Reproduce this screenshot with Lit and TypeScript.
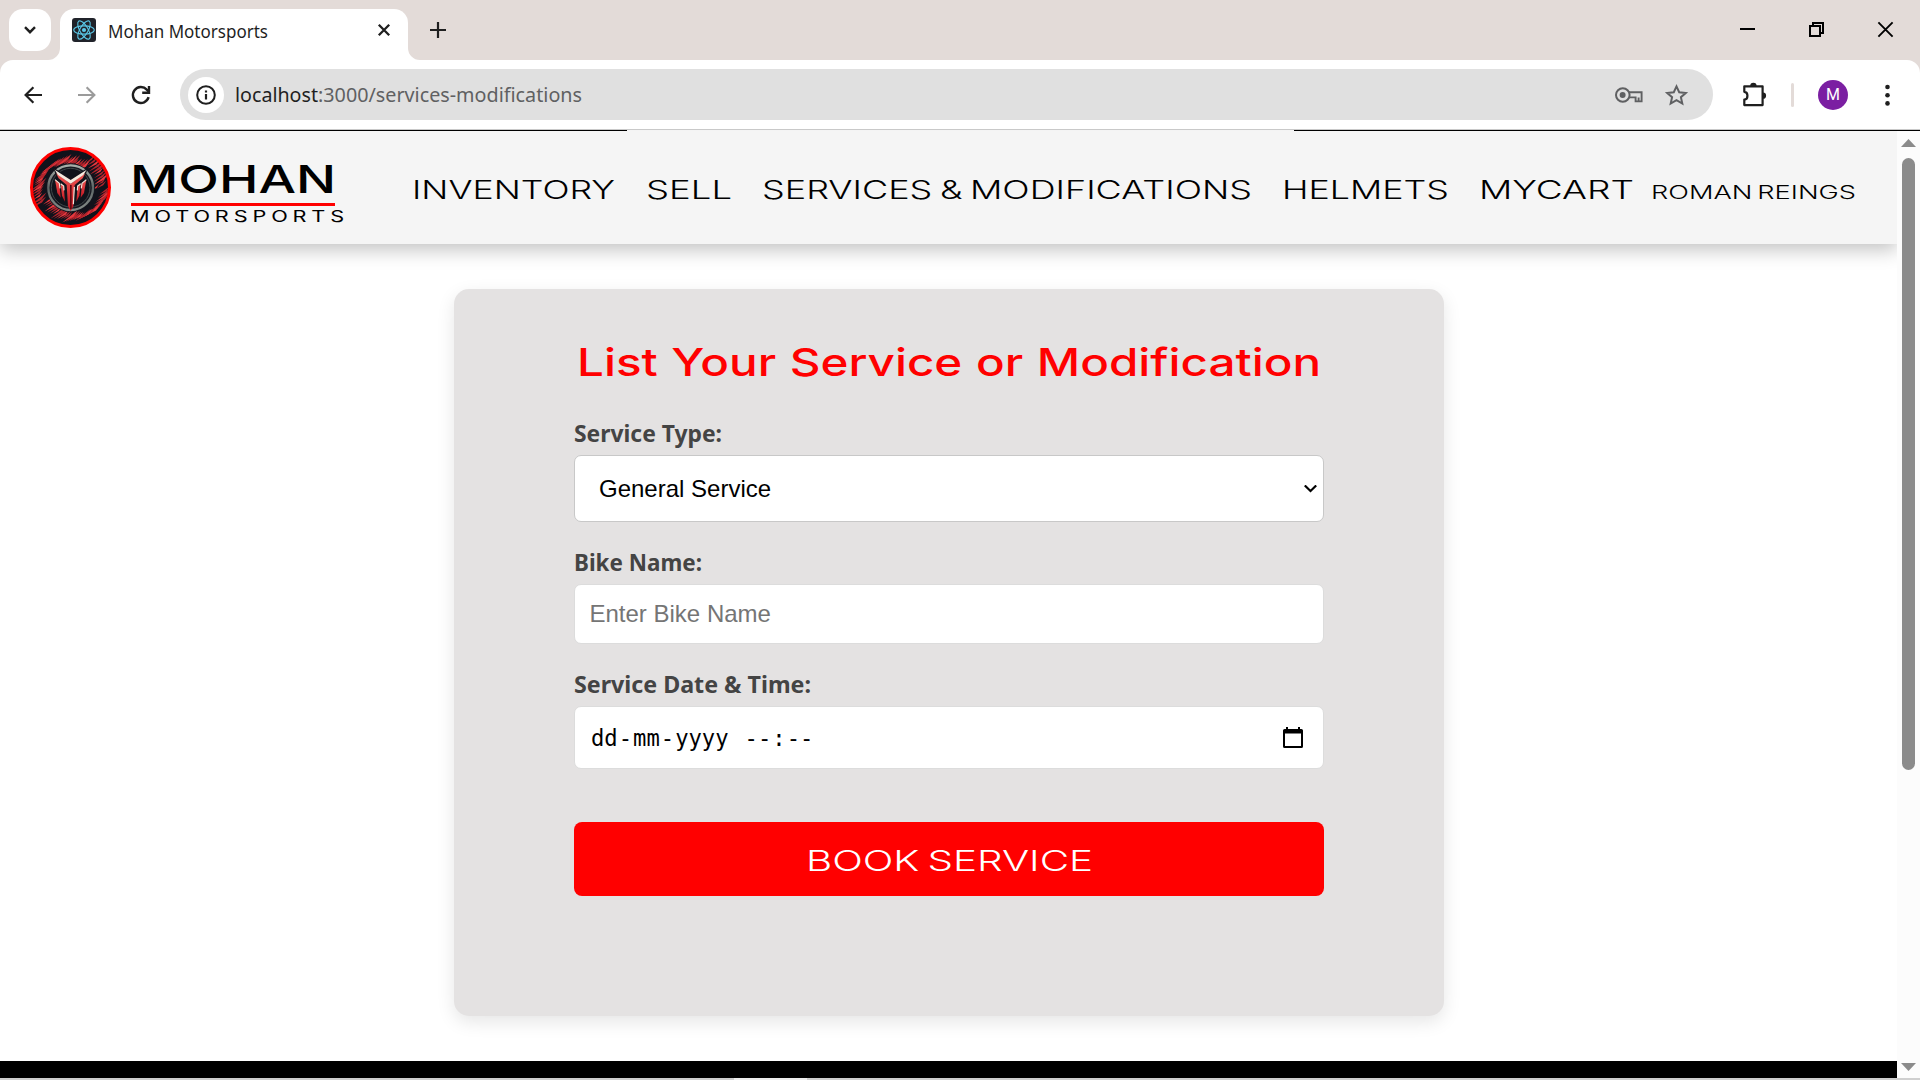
import { LitElement, html, svg, css } from "lit";
import { customElement, property } from "lit/decorators.js";

/** A single line of text set to an exact measure on a given baseline. */
@customElement("fit-text")
class FitText extends LitElement {
  @property() text = "";
  @property({ type: Number }) w = 100;
  @property({ type: Number }) h = 30;
  @property({ type: Number }) base = 22;
  @property({ type: Number }) size = 20;

  static styles = css`
    :host { display: block; flex: none; }
    svg { display: block; overflow: visible; }
    text { fill: currentColor; white-space: pre; }
  `;

  render() {
    return html`<svg width=${this.w} height=${this.h}>
      <text x="0" y=${this.base} font-size=${this.size} textLength=${this.w}
        lengthAdjust="spacingAndGlyphs">${this.text}</text></svg>`;
  }
}

@customElement("browser-chrome")
class BrowserChrome extends LitElement {
  static styles = css`
    :host { display: block; font-family: "Noto Sans", "Open Sans", sans-serif; color: #1f1f1f; }
    svg { display: block; flex: none; overflow: visible; }
    .strip { display: flex; height: 60px; background: #e3dbd8; box-sizing: border-box; padding: 9px 27px 0 9px; }
    .search { width: 42px; height: 42px; border-radius: 14px; background: #fff; display: grid; place-items: center; }
    .foot { align-self: flex-end; }
    .lead { margin-left: -3px; }
    .tab { width: 348px; height: 51px; background: #fff; border-radius: 14px 14px 0 0; display: flex;
      box-sizing: border-box; padding: 9px 18px 0 12px; }
    .title { margin: -9px auto 0 12px; }
    .x { margin-top: 6px; }
    .plus { margin: 13px auto 0 10px; }
    .win { display: flex; gap: 54px; margin-top: 13px; }
    .bar { display: flex; align-items: center; height: 69px; background: #e3dbd8; }
    .tools { display: flex; align-items: center; width: 100%; height: 69px; background: #fff;
      border-radius: 13px 13px 0 0; box-sizing: border-box; padding: 0 30.5px 0 24px; }
    .fwd { margin-left: 36px; }
    .reload { margin-left: 36px; }
    .url { margin-left: 30px; width: 1533px; height: 51px; border-radius: 26px; background: #e0e0e0;
      display: flex; align-items: center; box-sizing: border-box; padding: 0 25px 0 8px; }
    .info { width: 36px; height: 36px; border-radius: 50%; background: #fff; display: grid; place-items: center; }
    .host { margin-left: 11px; }
    .path { color: #5f6062; margin-right: auto; }
    .star { margin-left: 22px; }
    .puzzle { margin-left: 29px; }
    .sep { width: 3px; height: 24px; border-radius: 2px; background: #e3dbd8; margin-left: 24px; }
    .avatar { width: 30px; height: 30px; border-radius: 50%; background: #7b1fa2; color: #fff; margin-left: 24px;
      display: grid; place-items: center; font: 400 16px/30px Roboto, "Liberation Sans", sans-serif; }
    .dots { margin-left: auto; }
    .rule { height: 1px; background: #c9c9c9; }
  `;

  render() {
    return html`
      <div class="strip">
        <div class="search"><svg width="12" height="8" fill="none" stroke="#1f1f1f" stroke-width="2.4"><path d="M1 1.2 6 6.2 11 1.2" /></svg></div>
        <svg class="foot lead" width="12" height="12"><path d="M12 0V12H0A12 12 0 0 0 12 0Z" fill="#fff" /></svg>
        <div class="tab">
          <svg width="24" height="24" viewBox="0 0 24 24">
            <rect width="24" height="24" rx="3" fill="#20232a" />
            <g fill="none" stroke="#5bc8e8" stroke-width="1.1">
              <ellipse cx="12" cy="12" rx="10.3" ry="4.1" />
              <ellipse cx="12" cy="12" rx="10.3" ry="4.1" transform="rotate(60 12 12)" />
              <ellipse cx="12" cy="12" rx="10.3" ry="4.1" transform="rotate(120 12 12)" />
            </g><circle cx="12" cy="12" r="2.1" fill="#5bc8e8" />
          </svg>
          <fit-text class="title" text="Mohan Motorsports" w="160" h="40" base="29" size="18"></fit-text>
          <svg class="x" width="12" height="12" stroke="#1f1f1f" stroke-width="2.3"><path d="M.8.8 11.2 11.2M11.2.8.8 11.2" /></svg>
        </div>
        <svg class="foot" width="12" height="12"><path d="M0 0V12H12A12 12 0 0 1 0 0Z" fill="#fff" /></svg>
        <svg class="plus" width="16" height="16" stroke="#1f1f1f" stroke-width="2.2"><path d="M8 0V16M0 8H16" /></svg>
        <div class="win">
          <svg width="15" height="15" stroke="#000" stroke-width="2"><path d="M0 7H15" /></svg>
          <svg width="15" height="15" fill="none" stroke="#000" stroke-width="2"><path d="M1 4H11V14H1ZM4 4V1H14V11H11" /></svg>
          <svg width="15" height="15" stroke="#000" stroke-width="1.9"><path d="M.4.4 14.6 14.6M14.6.4.4 14.6" /></svg>
        </div>
      </div>
      <div class="bar"><div class="tools">
        <svg width="18" height="18" fill="none" stroke="#1f1f1f" stroke-width="2.2"><path d="M18 9H1.8M9.4 1.2 1.6 9 9.4 16.8" /></svg>
        <svg class="fwd" width="18" height="18" fill="none" stroke="#9b9b9b" stroke-width="2.1"><path d="M0 9H16.2M8.6 1.2 16.4 9 8.6 16.8" /></svg>
        <svg class="reload" width="18" height="18" fill="none" stroke="#1f1f1f" stroke-width="2.4"><path d="M16.6 11.2A8 8 0 1 1 14.8 3.6L17 5.8" /><path d="M17 0V6.8H10.2" /></svg>
        <div class="url">
          <div class="info"><svg width="20" height="20"><circle cx="10" cy="10" r="8.8" fill="none" stroke="#1f1f1f" stroke-width="2" /><path d="M10 9V14.6M10 5.4V7.5" stroke="#1f1f1f" stroke-width="2.2" /></svg></div>
          <fit-text class="host" text="localhost" w="83" h="51" base="32.6" size="20.5"></fit-text>
          <fit-text class="path" text=":3000/services-modifications" w="264" h="51" base="32.6" size="20.5"></fit-text>
          <svg width="28" height="18" viewBox="0 0 28 18"><circle cx="7.8" cy="9" r="6.8" fill="none" stroke="#5f6062" stroke-width="2" /><circle cx="7.6" cy="9" r="3" fill="#5f6062" /><path d="M14 6.2H26.6V15.4H20.6V11.4H14M23.6 15V11.6" fill="none" stroke="#5f6062" stroke-width="1.9" /></svg>
          <svg class="star" width="23" height="22" viewBox="0 0 23 22"><path d="M11.5 2.4 14.2 8.2 20.8 8.9 15.9 13.2 17.3 19.6 11.5 16.2 5.7 19.6 7.1 13.2 2.2 8.9 8.8 8.2Z" fill="none" stroke="#5f6062" stroke-width="2" /></svg>
        </div>
        <svg class="puzzle" width="25" height="25" viewBox="0 0 25 25"><path d="M2.3 4.3H20.6V23.1H2.3V17.6C6.5 17.4 6.5 10 2.3 9.8Z" fill="none" stroke="#1f1f1f" stroke-width="2.2" stroke-linejoin="round" /><path d="M8.2 4A3.2 3.2 0 0 1 14.6 4ZM21 10.6A3.1 3.1 0 0 1 21 16.8Z" fill="#1f1f1f" /></svg>
        <span class="sep"></span>
        <div class="avatar">M</div>
        <svg class="dots" width="5" height="22" fill="#1f1f1f"><circle cx="2.5" cy="3" r="2.3" /><circle cx="2.5" cy="11.2" r="2.3" /><circle cx="2.5" cy="19.4" r="2.3" /></svg>
      </div></div>
      <div class="rule"></div>`;
  }
}

@customElement("brand-logo")
class BrandLogo extends LitElement {
  static styles = css`:host { display: block; } svg { display: block; }`;

  render() {
    // Thin diagonal scratches scattered around the ring.
    const hatch = Array.from({ length: 72 }, (_, i) => {
      const a = (i / 72) * Math.PI * 2;
      const r = 74 + ((i * 29) % 30);
      const x = 121 + Math.cos(a) * r;
      const y = 121 + Math.sin(a) * r;
      const l = 12 + ((i * 17) % 14);
      return svg`<path d="M${x - l} ${y + l * 0.8}L${x + l} ${y - l * 0.8}L${x + l * 0.4} ${y + 2}Z"
        fill=${i % 3 ? "#b3242c" : "#e8383e"} />`;
    });
    return html`<svg width="81" height="81" viewBox="0 0 243 243">
      <defs><clipPath id="disc"><circle cx="121.5" cy="121.5" r="114" /></clipPath>
      <linearGradient id="steel" x1="0" y1="0" x2="0" y2="1"><stop offset="0" stop-color="#a9afa9" /><stop offset=".5" stop-color="#5d6666" /><stop offset="1" stop-color="#858b88" /></linearGradient>
      <linearGradient id="blade" x1="0" y1="0" x2="0" y2="1"><stop offset="0" stop-color="#ef5552" /><stop offset="1" stop-color="#c01420" /></linearGradient></defs>
      <circle cx="121.5" cy="121.5" r="117" fill="#11121b" />
      <g clip-path="url(#disc)">${hatch}</g>
      <circle cx="122" cy="122" r="73" fill="#151820" />
      <circle cx="122" cy="122" r="67" fill="none" stroke="url(#steel)" stroke-width="7" />
      <circle cx="122" cy="122" r="58" fill="#10131b" stroke="#3f4749" stroke-width="3" />
      <path d="M70 62 122 92 174 62 164 92 130 122H114L80 92Z" fill="#12141c" />
      <g fill="url(#blade)">
        <path d="M75 98 88 110 92 152 82 138Z" />
        <path d="M92 110 101 116 105 164 96 146Z" />
        <path d="M169 98 156 110 152 152 162 138Z" />
        <path d="M152 110 143 116 139 164 148 146Z" />
        <path d="M78 78 122 110 166 78 158 94 134 114 130 178 122 192 114 178 110 114 86 94Z" />
      </g>
      <path d="M120 114H125V186H120Z" fill="#5d0a12" />
      <g fill="none" stroke="#f4e3d8" stroke-width="3.5">
        <path d="M75 98 88 109 90 124M92 110 101 117 102 130M169 98 156 109 154 124M152 110 143 117 142 130" />
        <path d="M133 120 130 172" />
      </g>
      <path d="M74 68 122 99 170 68 160 84 122 110 84 84Z" fill="#f6eade" />
      <circle cx="121.5" cy="121.5" r="117" fill="none" stroke="#ff0000" stroke-width="9" />
    </svg>`;
  }
}

@customElement("site-header")
class SiteHeader extends LitElement {
  static styles = css`
    :host { display: block; }
    .bar { display: flex; height: 113px; background: #f5f5f5; box-shadow: 0 6px 18px rgba(0, 0, 0, 0.24);
      box-sizing: border-box; padding-left: 30px; color: #000; font-family: Inter, "DejaVu Sans", sans-serif; font-weight: 300; }
    .logo { margin-top: 16px; }
    .brand { margin: 19px 0 0 20px; width: 212px; }
    .name { font-weight: 450; margin-left: -1px; }
    .line { width: 204px; height: 3px; background: #f00; }
    .sub { font-weight: 400; letter-spacing: 3.4px; margin-left: -1px; }
    nav { display: flex; margin-left: 69px; word-spacing: -1.8px; }
    .gap { margin-left: 30px; }
    .first { margin-left: 31px; }
    .user { margin-left: 17px; }
  `;

  render() {
    return html`<div class="bar">
      <brand-logo class="logo"></brand-logo>
      <div class="brand">
        <fit-text class="name" text="MOHAN" w="206" h="53" base="42.6" size="38.5"></fit-text>
        <div class="line"></div>
        <fit-text class="sub" text="MOTORSPORTS" w="219" h="24" base="16.4" size="15.2"></fit-text>
      </div>
      <nav>
        <fit-text text="INVENTORY" w="203" h="100" base="68.2" size="25.6"></fit-text>
        <fit-text class="first" text="SELL" w="86" h="100" base="68.2" size="25.6"></fit-text>
        <fit-text class="gap" text="SERVICES &amp; MODIFICATIONS" w="490" h="100" base="68.2" size="25.6"></fit-text>
        <fit-text class="gap" text="HELMETS" w="167" h="100" base="68.2" size="25.6"></fit-text>
        <fit-text class="gap" text="MYCART" w="155" h="100" base="68.2" size="25.6"></fit-text>
        <fit-text class="user" text="ROMAN REINGS" w="205" h="100" base="68.2" size="18"></fit-text>
      </nav>
    </div>`;
  }
}

@customElement("service-form")
class ServiceForm extends LitElement {
  static styles = css`
    :host { display: block; width: 990px; height: 727px; box-sizing: border-box; padding: 45px 120px 0;
      border-radius: 15px; background: #e4e2e2; box-shadow: 0 6px 18px rgba(0, 0, 0, 0.1); }
    svg { display: block; }
    .title { margin: 0 0 20px 3px; color: #f00; font-family: Inter, "DejaVu Sans", sans-serif; font-weight: 500; word-spacing: 0.8px; }
    .label { color: #444; font-family: "Noto Sans", "Open Sans", sans-serif; font-weight: 700; }
    .control { display: block; width: 750px; box-sizing: border-box; border: 1px solid #dcdcdc; border-radius: 7px;
      background: #fff; font: 24px "Liberation Sans", Arial, sans-serif; margin: 0; outline: none; }
    .pick { display: grid; grid-template-columns: 1fr 13px; align-items: center; height: 67px; padding: 0 6px 0 24px; border-color: #c8c8c8; color: #000; }
    .bike { height: 60px; padding: 0 15px 0 14.5px; }
    .bike::placeholder { color: #757575; opacity: 1; }
    .date { height: 63px; display: flex; align-items: center; justify-content: space-between; padding: 0 20px 0 15px; }
    .fields { display: flex; padding-top: 1px; font: 22.2px "DejaVu Sans Mono", "Liberation Mono", monospace; }
    .part { padding: 0 1px; }
    .hour { margin-left: 14px; }
    button { display: grid; place-items: center; width: 750px; height: 74px; margin-top: 53px; padding: 0; border: 0;
      border-radius: 8px; background: #f00; color: #fff; font-family: Inter, "DejaVu Sans", sans-serif; font-weight: 300; word-spacing: -2.2px; }
  `;

  render() {
    return html`
      <fit-text class="title" text="List Your Service or Modification" w="744" h="56" base="42.3" size="38.5"></fit-text>
      <fit-text class="label" text="Service Type:" w="148" h="45" base="31.7" size="23.5"></fit-text>
      <div class="control pick">
        <span>General Service</span>
        <svg width="13" height="8" fill="none" stroke="#000" stroke-width="2.1"><path d="M.8.4 6.5 6 12.2.4" /></svg>
      </div>
      <fit-text class="label" text="Bike Name:" w="128" h="62" base="49" size="23.5"></fit-text>
      <input class="control bike" placeholder="Enter Bike Name" />
      <fit-text class="label" text="Service Date &amp; Time:" w="237" h="62" base="49" size="23.5"></fit-text>
      <div class="control date">
        <div class="fields">
          <span class="part">dd</span>-<span class="part">mm</span>-<span class="part">yyyy</span>
          <span class="part hour">--</span>:<span class="part">--</span>
        </div>
        <svg width="20" height="21" viewBox="0 0 20 21"><path d="M3 0H5V2H15V0H17V2H18.4Q20 2 20 3.6V19.4Q20 21 18.4 21H1.6Q0 21 0 19.4V3.6Q0 2 1.6 2H3ZM2 6.4V19H18V6.4Z" fill="#000" fill-rule="evenodd" /></svg>
      </div>
      <button><fit-text text="BOOK SERVICE" w="287" h="74" base="49" size="28.4"></fit-text></button>`;
  }
}

@customElement("app-root")
class AppRoot extends LitElement {
  static styles = css`
    :host { display: block; width: 1920px; height: 1080px; overflow: hidden; background: #fff; }
    .view { display: flex; height: 947px; }
    .top { display: flex; justify-content: space-between; height: 1px; background: #f4f4f4; }
    .left { width: 627px; background: #000; }
    .right { width: 626px; background: #000; }
    .page { width: 1897px; height: 947px; overflow: hidden; }
    .head { height: 113px; }
    .form { margin: 45px 0 0 454px; }
    .footer { height: 17px; margin-top: 45px; background: #000; }
    .scroll { width: 23px; background: #fcfcfc; display: flex; flex-direction: column; align-items: center;
      box-sizing: border-box; padding: 8px 0 7px; }
    .scroll svg { display: block; flex: none; }
    .thumb { width: 13px; height: 612px; border-radius: 7px; background: #8b8b8b; margin: 11px 0 auto; }
    .edge { display: flex; height: 2px; background: #cfcfcf; }
    .lit { width: 73px; margin-left: 734px; background: #eee; }
  `;

  render() {
    return html`
      <browser-chrome></browser-chrome>
      <div class="top"><div class="left"></div><div class="right"></div></div>
      <div class="view">
        <div class="page">
          <site-header class="head"></site-header>
          <service-form class="form"></service-form>
          <div class="footer"></div>
        </div>
        <div class="scroll">
          <svg width="15" height="8"><path d="M7.5 0 15 8H0Z" fill="#8b8b8b" /></svg>
          <div class="thumb"></div>
          <svg width="15" height="8"><path d="M7.5 8 15 0H0Z" fill="#8b8b8b" /></svg>
        </div>
      </div>
      <div class="edge"><div class="lit"></div></div>`;
  }
}
